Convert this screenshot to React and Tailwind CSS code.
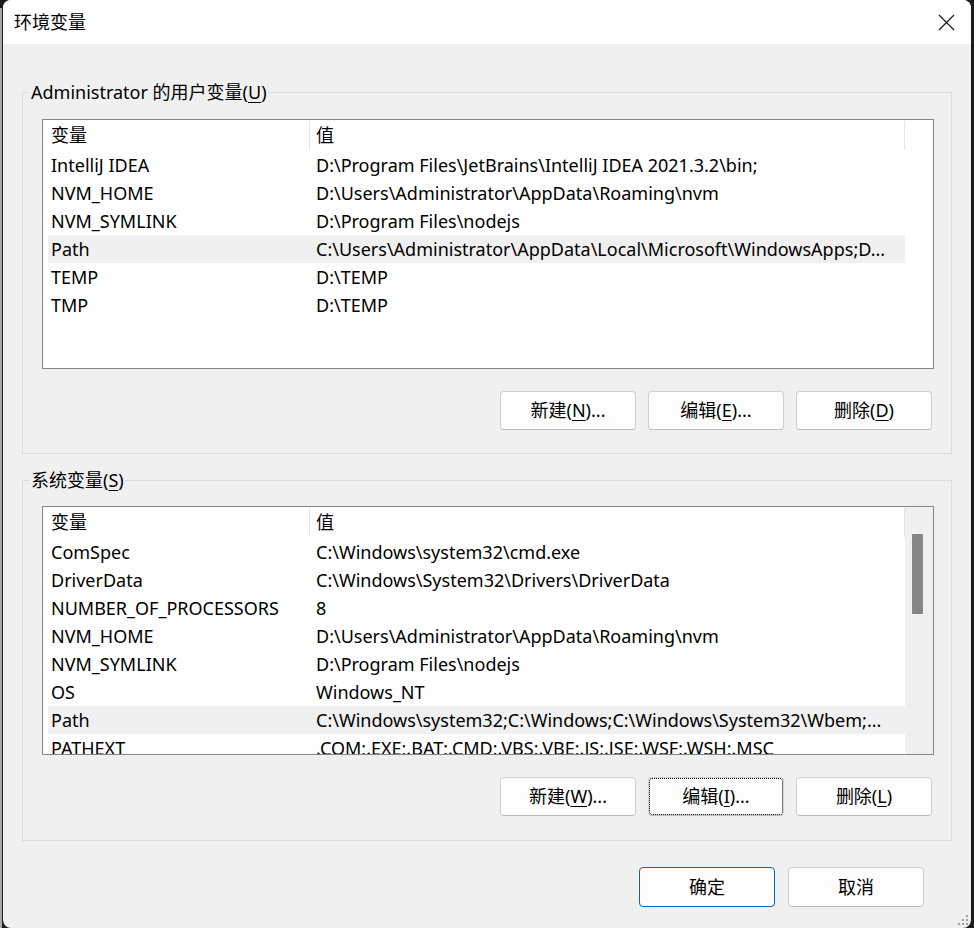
import React from "react";

const userVars = [
  ["IntelliJ IDEA", "D:\\Program Files\\JetBrains\\IntelliJ IDEA 2021.3.2\\bin;"],
  ["NVM_HOME", "D:\\Users\\Administrator\\AppData\\Roaming\\nvm"],
  ["NVM_SYMLINK", "D:\\Program Files\\nodejs"],
  ["Path", "C:\\Users\\Administrator\\AppData\\Local\\Microsoft\\WindowsApps;D..."],
  ["TEMP", "D:\\TEMP"],
  ["TMP", "D:\\TEMP"],
];

const sysVars = [
  ["ComSpec", "C:\\Windows\\system32\\cmd.exe"],
  ["DriverData", "C:\\Windows\\System32\\Drivers\\DriverData"],
  ["NUMBER_OF_PROCESSORS", "8"],
  ["NVM_HOME", "D:\\Users\\Administrator\\AppData\\Roaming\\nvm"],
  ["NVM_SYMLINK", "D:\\Program Files\\nodejs"],
  ["OS", "Windows_NT"],
  ["Path", "C:\\Windows\\system32;C:\\Windows;C:\\Windows\\System32\\Wbem;..."],
  ["PATHEXT", ".COM;.EXE;.BAT;.CMD;.VBS;.VBE;.JS;.JSE;.WSF;.WSH;.MSC"],
];

function Key({ k }) {
  return <u className="underline-offset-[3px] decoration-1">{k}</u>;
}

function Btn({ children, focused, primary, className = "" }) {
  return (
    <button
      className={
        "flex h-[39px] w-[136px] items-center justify-center rounded-[4px] border bg-[#fdfdfd] text-[18px] text-black " +
        (primary ? "border-[#0067c0] " : "border-[#d0d0d0] border-b-[#bcbcbc] ") +
        (focused ? "outline-1 outline-dotted outline-black outline-offset-[-2px] " : "") +
        className
      }
    >
      {children}
    </button>
  );
}

// 列表视图
function ListView({ rows, selected, scroll, height }) {
  return (
    <div className={"flex overflow-hidden border border-[#828790] bg-white " + height}>
      <div className="w-[862px]">
        <div className="flex h-[31px] items-center text-[18px]">
          <div className="w-[266px] pl-[8px]">变量</div>
          <div className="h-[29px] w-px bg-[#e5e5e5]" />
          <div className="flex-1 pl-[6px]">值</div>
          <div className="h-[29px] w-px bg-[#e5e5e5]" />
        </div>
        {rows.map(([name, value]) => (
          <div
            key={name}
            className={
              "ml-[5px] flex h-[28px] items-center whitespace-nowrap text-[18px] " +
              (name === selected ? "bg-[#f0f0f0]" : "")
            }
          >
            <div className="w-[268px] pl-[3px]">{name}</div>
            <div className="flex-1 overflow-hidden">{value}</div>
          </div>
        ))}
      </div>
      <div className={"flex-1 " + (scroll ? "bg-[#f0f0f0]" : "bg-white")}>
        {scroll && <div className="ml-[7px] mt-[27px] h-[80px] w-[11px] rounded-[1px] bg-[#858585]" />}
      </div>
    </div>
  );
}

function Group({ label, children, className = "" }) {
  return (
    <fieldset className={"mx-[19px] border border-[#dcdcdc] p-0 " + className}>
      <legend className="ml-[7px] px-[1px] text-[18px] leading-[24px]">{label}</legend>
      {children}
    </fieldset>
  );
}

export default function App() {
  return (
    <div className="flex h-[928px] w-[974px] overflow-hidden bg-[#1c1c1c] font-['Noto_Sans','Noto_Sans_CJK_SC',sans-serif] text-black">
      <div className="mt-[8px] w-[2px] bg-[#a8a8a8]" />
      <div className="ml-px flex w-[968px] flex-col overflow-hidden rounded-[8px] bg-[#f0f0f0]">
        {/* 标题栏 */}
        <div className="flex h-[44px] shrink-0 items-center bg-white">
          <div className="flex-1 pl-[11px] text-[18px]">环境变量</div>
          <div className="flex w-[50px] items-center justify-center">
            <svg width="17" height="17" viewBox="0 0 17 17">
              <path d="M1 1L16 16M16 1L1 16" stroke="#1a1a1a" strokeWidth="1.2" />
            </svg>
          </div>
        </div>

        <Group className="mt-[36px]" label={<>Administrator 的用户变量(<Key k="U" />)</>}>
          <div className="pb-[23px] pl-[19px] pr-[17px] pt-[15px]">
            <ListView rows={userVars} selected="Path" height="h-[250px]" />
            <div className="mt-[22px] flex justify-end gap-[12px] pr-[2px]">
              <Btn>新建(<Key k="N" />)...</Btn>
              <Btn>编辑(<Key k="E" />)...</Btn>
              <Btn>删除(<Key k="D" />)</Btn>
            </div>
          </div>
        </Group>

        <Group className="mt-[14px]" label={<>系统变量(<Key k="S" />)</>}>
          <div className="pb-[24px] pl-[19px] pr-[17px] pt-[14px]">
            <ListView rows={sysVars} selected="Path" scroll height="h-[249px]" />
            <div className="mt-[22px] flex justify-end gap-[12px] pr-[2px]">
              <Btn>新建(<Key k="W" />)...</Btn>
              <Btn focused>编辑(<Key k="I" />)...</Btn>
              <Btn>删除(<Key k="L" />)</Btn>
            </div>
          </div>
        </Group>

        <div className="mt-[26px] flex justify-end gap-[13px] pr-[47px]">
          <Btn primary className="h-[40px]">确定</Btn>
          <Btn className="h-[40px]">取消</Btn>
        </div>
        <div className="flex flex-1 items-end justify-end">
          <svg width="14" height="14" viewBox="0 0 14 14" className="mb-[1px] mr-[1px]">
            <rect x="10" y="2" width="2" height="2" fill="#a0a0a0" />
            <rect x="6" y="6" width="2" height="2" fill="#a0a0a0" />
            <rect x="10" y="6" width="2" height="2" fill="#a0a0a0" />
            <rect x="2" y="10" width="2" height="2" fill="#a0a0a0" />
            <rect x="6" y="10" width="2" height="2" fill="#a0a0a0" />
            <rect x="10" y="10" width="2" height="2" fill="#a0a0a0" />
          </svg>
        </div>
      </div>
      <div className="flex-1" />
    </div>
  );
}
